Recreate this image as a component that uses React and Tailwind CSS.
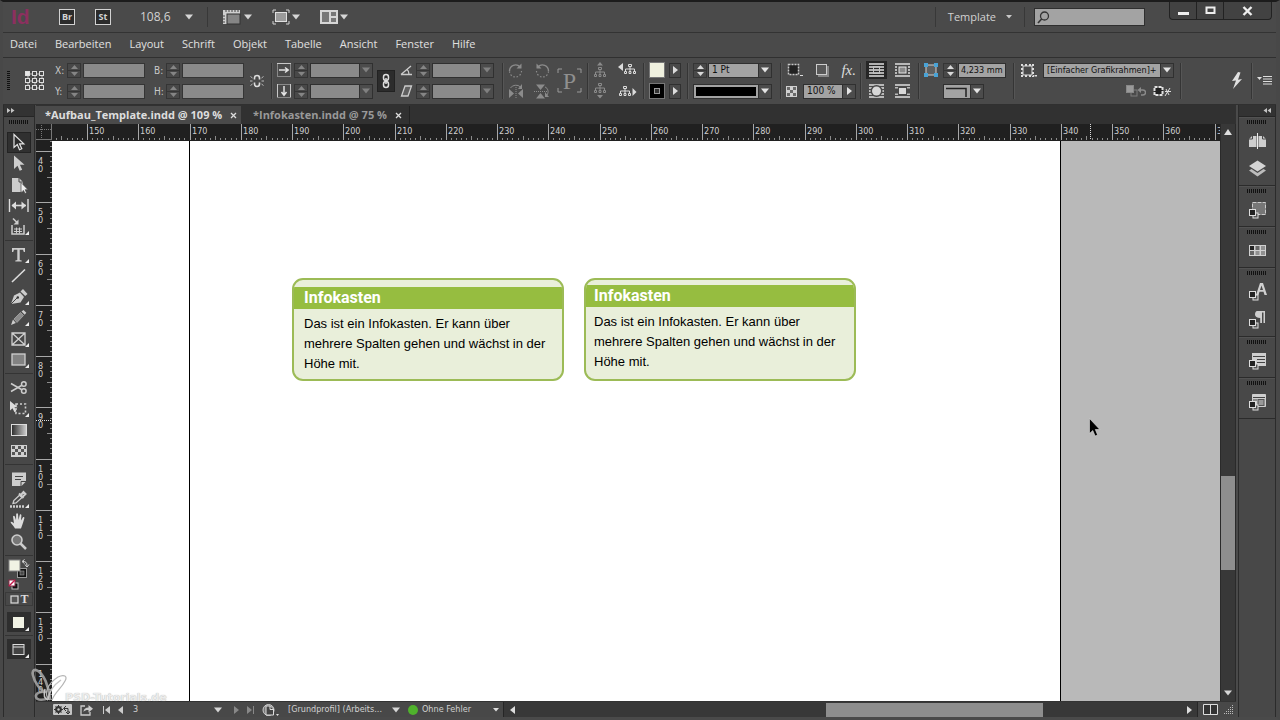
import React from "react";

const SMALL = "font-['DejaVu_Sans_Condensed','DejaVu_Sans',sans-serif]";

/* ---------- generic pieces ---------- */

function Svg({ w, h, children, className = "" }) {
  return (
    <svg width={w} height={h} viewBox={`0 0 ${w} ${h}`} fill="none" aria-hidden="true" className={`shrink-0 ${className}`}>
      {children}
    </svg>
  );
}

function Down({ className = "text-[#d6d6d6]" }) {
  return (
    <Svg w={8} h={6} className={className}>
      <path d="M0 0.5h8L4 5.5z" fill="currentColor" />
    </Svg>
  );
}

function Grip() {
  return (
    <Svg w={20} h={4}>
      {Array.from({ length: 10 }, (_, i) => (
        <rect key={i} x={i * 2} y="0" width="1" height="4" fill="#111" />
      ))}
    </Svg>
  );
}

function Spinner({ label, dim }) {
  const tone = dim ? "text-[#858585]" : "text-[#d8d8d8]";
  return (
    <span className={`flex h-[15px] w-3.5 shrink-0 flex-col border border-[#353535] bg-[#484848] ${tone}`}>
      <button type="button" aria-label={`${label} erhöhen`} className="flex flex-1 items-center justify-center border-b border-[#353535]">
        <Svg w={7} h={4}><path d="M0 4h7L3.5 0z" fill="currentColor" /></Svg>
      </button>
      <button type="button" aria-label={`${label} verringern`} className="flex flex-1 items-center justify-center">
        <Svg w={7} h={4}><path d="M0 0h7L3.5 4z" fill="currentColor" /></Svg>
      </button>
    </span>
  );
}

function Field({ label, width }) {
  return (
    <div className="flex h-4 items-center">
      <label htmlFor={`f-${label}`} className="w-3 text-[10px] text-[#c9c9c9]">{label}:</label>
      <Spinner label={label} dim />
      <input id={`f-${label}`} className={`ml-0.5 h-[15px] border border-[#353535] bg-[#8a8a8a] px-1 text-[10px] ${width}`} />
    </div>
  );
}

function Drop({ label, value = "", width, dim, side, size = "text-[10px]", children }) {
  return (
    <div className={`grid h-[15px] items-stretch border border-[#303030] ${width} ${dim ? "bg-[#8a8a8a] text-[#808080]" : "bg-[#a3a3a3] text-[#e4e4e4]"}`}>
      <select aria-label={label} className={`[grid-area:1/1] w-full min-w-0 appearance-none bg-transparent pl-[3px] leading-3 text-[#101010] ${size}`}>
        <option>{value}</option>
      </select>
      {children}
      <span className="pointer-events-none flex w-[13px] items-center justify-center justify-self-end border-l border-[#303030] bg-[#4c4c4c] [grid-area:1/1]">
        {side ? <Svg w={5} h={8}><path d="M0 0v8l5-4z" fill="currentColor" /></Svg> : <Down className="" />}
      </span>
    </div>
  );
}

function Divider({ w = "w-1.5" }) {
  return <div className={`h-9 shrink-0 border-l border-[#353535] ${w}`}><div className="h-full w-px bg-[#565656]" /></div>;
}

function Col({ w, children }) {
  return <div className={`flex shrink-0 flex-col gap-[5px] ${w}`}>{children}</div>;
}

function Cell({ label, children, className = "" }) {
  return <button type="button" aria-label={label} className={`flex h-4 items-center ${className}`}>{children}</button>;
}

/* ---------- top bars ---------- */

function TitleBar() {
  return (
    <header className="flex h-[31px] shrink-0 items-center border-b border-[#333] pl-2 text-[#d2d2d2]">
      <span className="w-12 text-[21px] font-bold leading-6 text-[#8c2f5f] font-['Liberation_Sans',sans-serif]">Id</span>
      <button type="button" className="mr-5 h-4 w-4 border border-[#d2d2d2] bg-[#2b2b2b] text-center text-[9px] font-bold leading-[14px]">Br</button>
      <button type="button" className="mr-[22px] h-4 w-4 border border-[#d2d2d2] bg-[#2b2b2b] text-center text-[9px] font-bold leading-[14px]">St</button>
      <button type="button" aria-label="Zoomstufe" className="flex w-[59px] items-center gap-3.5 pl-[7px] text-[12px]">
        <span className="w-8 text-center">108,6</span><Down />
      </button>
      <div className="h-5 w-4 border-r border-[#383838]" />
      <button type="button" aria-label="Anzeigeoptionen" className="ml-3.5 flex w-12 items-center gap-0.5">
        <Svg w={20} h={16}>
          <path d="M1 1h17v4H5v10H1z" fill="#cfcfcf" />
          <path d="M4 1v2M7 1v2M10 1v2M13 1v2M16 1v2M1 7h2M1 10h2M1 13h2" stroke="#444" />
          <rect x="5" y="5" width="13" height="10" fill="#858585" stroke="#333" />
        </Svg>
        <Down />
      </button>
      <button type="button" aria-label="Bildschirmmodus" className="ml-0.5 flex w-12 items-center gap-0.5">
        <Svg w={18} h={16}>
          <path d="M1 4V1h3M14 1h3v3M17 12v3h-3M4 15H1v-3" stroke="#d2d2d2" />
          <rect x="3.5" y="3.5" width="11" height="9" fill="#9b9b9b" stroke="#e0e0e0" />
        </Svg>
        <Down />
      </button>
      <button type="button" aria-label="Dokumente anordnen" className="flex items-center gap-0.5">
        <Svg w={18} h={16}>
          <rect x="0" y="1" width="18" height="14" fill="#d6d6d6" />
          <path d="M2 3h7v10H2zM11 3h5v4h-5zM11 9h5v4h-5z" fill="#777" />
        </Svg>
        <Down />
      </button>
      <div className="ml-auto h-5 border-l border-[#383838]" />
      <button type="button" className="flex items-center gap-2.5 px-3 text-[11px]">
        Template
        <Svg w={6} h={4}><path d="M0 0h6L3 3.5z" fill="#c8c8c8" /></Svg>
      </button>
      <div className="h-5 border-l border-[#383838]" />
      <label className="ml-[9px] mr-6 flex h-[18px] w-[111px] items-center border border-[#2f2f2f] bg-[#a3a3a3] pl-0.5">
        <Svg w={13} h={13}>
          <circle cx="7.5" cy="5" r="4" stroke="#333" strokeWidth="1.3" />
          <path d="M4.6 8L1 12" stroke="#333" strokeWidth="1.6" />
        </Svg>
        <input aria-label="Suche" className="min-w-0 flex-1 bg-transparent text-[11px] text-black" />
      </label>
      <div className="mr-1 flex h-[18px] self-start rounded-b border border-t-0 border-[#222] bg-[#424242]">
        <button type="button" aria-label="Minimieren" className="flex w-[27px] items-center justify-center border-r border-[#222]">
          <Svg w={11} h={10}><path d="M0 6h11v3H0z" fill="#eee" /></Svg>
        </button>
        <button type="button" aria-label="Maximieren" className="flex w-[27px] items-center justify-center border-r border-[#222]">
          <Svg w={11} h={9}><path d="M1.5 1.5h8v5.5h-8z" stroke="#eee" strokeWidth="2" /></Svg>
        </button>
        <button type="button" aria-label="Schließen" className="flex w-[47px] items-center justify-center">
          <Svg w={11} h={10}><path d="M1.5 1l8 8M9.5 1l-8 8" stroke="#eee" strokeWidth="2.4" /></Svg>
        </button>
      </div>
    </header>
  );
}

const MENUS = ["Datei", "Bearbeiten", "Layout", "Schrift", "Objekt", "Tabelle", "Ansicht", "Fenster", "Hilfe"];

function MenuBar() {
  return (
    <nav className="flex h-6 shrink-0 items-center gap-[18px] pb-0.5 pl-[7px] text-[11px] text-[#e0e0e0]">
      {MENUS.map((m) => <button type="button" key={m}>{m}</button>)}
    </nav>
  );
}

function Rotate({ flip }) {
  return (
    <Svg w={16} h={15} className={flip ? "-scale-x-100" : ""}>
      <path d="M1.5 8a6 6 0 0 1 10.5-4" stroke="#8b8b8b" strokeWidth="1.4" />
      <path d="M13.5 0.5v5h-5z" fill="#8b8b8b" />
      <path d="M13.5 8a6 6 0 0 1-12 0" stroke="#8b8b8b" strokeWidth="1.2" strokeDasharray="1.5 1.8" />
    </Svg>
  );
}

function Tree({ dir, tone }) {
  const shift = { up: "translate(0 2)", down: "translate(0 -3)", left: "translate(5 -1)", right: "translate(0 0)" }[dir];
  return (
    <Svg w={20} h={16} className={tone}>
      <g stroke="currentColor">
        {dir === "up" && <path d="M4 3.500h6L7 0z" fill="currentColor" stroke="none" />}
        {dir === "down" && <path d="M4 12h6l-3 3.500z" fill="currentColor" stroke="none" />}
        {dir === "left" && <path d="M5 1v8L0 5z" fill="currentColor" stroke="none" />}
        {dir === "right" && <path d="M14.500 5v8l4-4z" fill="currentColor" stroke="none" />}
        <g transform={shift}>
          <path d="M5.500 3.500h3v2h-3zM7 6v4M2.500 10V8h9v2M1.500 10.500h2v2h-2zM6 10.500h2v2H6zM10.500 10.500h2v2h-2z" />
        </g>
      </g>
    </Svg>
  );
}

function Wrap({ kind }) {
  return (
    <Svg w={15} h={14}>
      <path d="M0 1h15M0 4h15M0 7h15M0 10h15M0 13h15" stroke="#dedede" strokeWidth="1.4" />
      {kind === "none" && <rect x="4.500" y="3.500" width="6" height="7" stroke="#c0c0c0" />}
      {kind === "box" && <><rect x="2" y="2.500" width="11" height="9" fill="#484848" /><rect x="4" y="4" width="7" height="6" fill="#8a8a8a" stroke="#e4e4e4" /></>}
      {kind === "shape" && <><circle cx="7.500" cy="7" r="6" fill="#484848" /><circle cx="7.500" cy="7" r="4.500" fill="#d8d8d8" /></>}
      {kind === "jump" && <><rect y="4.500" width="15" height="5" fill="#484848" /><rect x="3" y="2.500" width="9" height="9" fill="#484848" /><rect x="4" y="4" width="7" height="6" fill="#d8d8d8" /></>}
    </Svg>
  );
}

function Shift({ down }) {
  return (
    <Svg w={14} h={14}>
      <rect x="0.500" y="0.500" width="13" height="13" stroke="#c8c8c8" strokeDasharray="1 1" />
      <path d={down ? "M0.500 0v13M13.500 0v13" : "M0 0.500h14"} stroke="#c8c8c8" />
      <path d={down ? "M7 2v9M4.500 8L7 11.200 9.500 8" : "M2 7h9M8 4.500L11.200 7 8 9.500"} stroke="#e4e4e4" strokeWidth="1.500" />
    </Svg>
  );
}

function ControlBar() {
  return (
    <section aria-label="Steuerung" className={`flex h-12 shrink-0 items-center overflow-hidden border-y border-[#303030] pb-px text-[#c9c9c9] ${SMALL}`}>
      <div className="flex w-[22px] shrink-0 pl-1">
        <Svg w={4} h={20}>
          {Array.from({ length: 10 }, (_, i) => <rect key={i} y={i * 2} width="3" height="1" fill="#111" />)}
        </Svg>
      </div>
      <div className="w-[30px] shrink-0">
        <Svg w={20} h={20}>
          <path d="M3 3h14v14H3zM10 3v14M3 10h14" stroke="#bcbcbc" />
          {[0, 1, 2].map((r) => [0, 1, 2].map((c) => (
            <rect key={`${r}${c}`} x={c * 7 + 0.5} y={r * 7 + 0.5} width="4" height="4" fill={r + c === 0 ? "#e6e6e6" : "#484848"} stroke="#dedede" />
          )))}
        </Svg>
      </div>
      <Col w="w-[99px]"><Field label="X" width="w-[62px]" /><Field label="Y" width="w-[62px]" /></Col>
      <Col w="w-24"><Field label="B" width="w-[62px]" /><Field label="H" width="w-[62px]" /></Col>
      <button type="button" aria-label="Proportionen" className="w-[21px] shrink-0">
        <Svg w={14} h={14}>
          <path d="M4.500 5.500V4a2.500 2.500 0 0 1 5 0v1.500M4.500 8.500V10a2.500 2.500 0 0 0 5 0V8.500" stroke="#ddd" strokeWidth="1.600" />
          <path d="M0 7h2.500M11.500 7H14M0.500 2.500l2 1.500M13.500 2.500l-2 1.500M0.500 11.500l2-1.500M13.500 11.500l-2-1.500" stroke="#bbb" />
        </Svg>
      </button>
      <Divider />
      <Col w="w-[17px]"><Cell label="Skalierung X"><Shift /></Cell><Cell label="Skalierung Y"><Shift down /></Cell></Col>
      <Col w="w-[83px]">
        <div className="flex h-4 items-center gap-0.5"><Spinner label="Skalierung X" dim /><Drop label="Skalierung X Wert" width="w-[63px]" dim /></div>
        <div className="flex h-4 items-center gap-0.5"><Spinner label="Skalierung Y" dim /><Drop label="Skalierung Y Wert" width="w-[63px]" dim /></div>
      </Col>
      <div className="w-[23px] shrink-0">
        <button type="button" aria-label="Verketten" className="flex h-[22px] w-[18px] items-center justify-center border border-[#222] bg-[#2c2c2c]">
          <Svg w={8} h={16}>
            <rect x="1.500" y="1.500" width="5" height="6" rx="2.500" stroke="#ddd" strokeWidth="1.500" />
            <rect x="1.500" y="8.500" width="5" height="6" rx="2.500" stroke="#ddd" strokeWidth="1.500" />
            <path d="M4 5v6" stroke="#ddd" strokeWidth="1.500" />
          </Svg>
        </button>
      </div>
      <Col w="w-4">
        <Cell label="Drehwinkel"><Svg w={13} h={12}><path d="M1 10.500h11M1 10.500L11 2M7 5.500c1.500 1 2 3 2 5" stroke="#ccc" strokeWidth="1.300" /></Svg></Cell>
        <Cell label="Scherwinkel"><Svg w={13} h={12}><path d="M5 1h6.500L8 11H1.500z" fill="#606060" stroke="#ccc" strokeWidth="1.300" /></Svg></Cell>
      </Col>
      <Col w="w-[86px]">
        <div className="flex h-4 items-center gap-0.5"><Spinner label="Drehwinkel" dim /><Drop label="Drehwinkel Wert" width="w-[62px]" dim /></div>
        <div className="flex h-4 items-center gap-0.5"><Spinner label="Scherwinkel" dim /><Drop label="Scherwinkel Wert" width="w-[62px]" dim /></div>
      </Col>
      <Divider />
      <Col w="w-[26px]">
        <Cell label="Im Uhrzeigersinn drehen"><Rotate /></Cell>
        <Cell label="Horizontal spiegeln">
          <Svg w={16} h={15}>
            <path d="M1 5v9l5-4.500zM15 5v9l-5-4.500z" fill="#8b8b8b" />
            <path d="M8 3v12" stroke="#8b8b8b" strokeDasharray="1 1" /><path d="M2.500 4a6 5 0 0 1 10-1" stroke="#8b8b8b" /><path d="M14 0v5h-4z" fill="#8b8b8b" />
          </Svg>
        </Cell>
      </Col>
      <Col w="w-[23px]">
        <Cell label="Gegen Uhrzeigersinn drehen"><Rotate flip /></Cell>
        <Cell label="Vertikal spiegeln">
          <Svg w={16} h={15}>
            <path d="M2 0.500h9L6.500 6zM2 14.500h9L6.500 9z" fill="#8b8b8b" />
            <path d="M0 7.500h13" stroke="#8b8b8b" strokeDasharray="1 1" /><path d="M11 3c3 1 4 5 2 8" stroke="#8b8b8b" /><path d="M11 8v5h4z" fill="#8b8b8b" />
          </Svg>
        </Cell>
      </Col>
      <div className="w-[30px] shrink-0">
        <div className="grid h-[25px] w-[25px] place-items-center">
          <Svg w={25} h={25} className="[grid-area:1/1]"><path d="M1 5V1h4M20 1h4v4M24 20v4h-4M5 24H1v-4" stroke="#9a9a9a" /></Svg>
          <span className="text-[24px] leading-6 text-[#8f8f8f] [grid-area:1/1] font-['Liberation_Serif',serif]">P</span>
        </div>
      </div>
      <Divider />
      <Col w="w-[25px]"><Cell label="Container auswählen"><Tree dir="up" tone="text-[#8b8b8b]" /></Cell><Cell label="Inhalt auswählen"><Tree dir="down" tone="text-[#8b8b8b]" /></Cell></Col>
      <Col w="w-[25px]"><Cell label="Vorheriges Objekt"><Tree dir="left" tone="text-[#dcdcdc]" /></Cell><Cell label="Nächstes Objekt"><Tree dir="right" tone="text-[#dcdcdc]" /></Cell></Col>
      <Divider />
      <Col w="w-5">
        <Cell label="Fläche"><span className="h-4 w-4 border border-[#777] bg-[#eff0de]" /></Cell>
        <Cell label="Kontur"><span className="flex h-4 w-4 items-center justify-center border border-[#777] bg-black"><span className="h-1.5 w-1.5 border border-[#999] bg-[#333]" /></span></Cell>
      </Col>
      <Col w="w-[18px]">
        {["Flächenfarbe wählen", "Konturfarbe wählen"].map((l) => (
          <Cell key={l} label={l}><span className="flex h-[15px] w-3 items-center justify-center border border-[#303030]"><Svg w={5} h={8}><path d="M0 0v8l5-4z" fill="#ddd" /></Svg></span></Cell>
        ))}
      </Col>
      <Divider />
      <Col w="w-[87px]">
        <div className="flex h-4 items-center gap-px"><Spinner label="Konturstärke" /><Drop label="Konturstärke Wert" value="1 Pt" width="w-16" /></div>
        <div className="flex h-4 items-center">
          <Drop label="Konturtyp" width="w-[79px]"><span className="pointer-events-none my-0.5 ml-0.5 mr-[15px] bg-black [grid-area:1/1]" /></Drop>
        </div>
      </Col>
      <Divider />
      <Col w="w-[74px]">
        <div className="flex h-4 items-center justify-between pl-px pr-1">
          <Cell label="Kontureffekt"><Svg w={16} h={14}><rect x="1.500" y="1.500" width="10" height="10" fill="#222" stroke="#c8c8c8" strokeWidth="1.500" strokeDasharray="2 1" /><path d="M13 12h3v1h-3z" fill="#ddd" /></Svg></Cell>
          <Cell label="Schlagschatten"><Svg w={14} h={14}><rect x="3" y="3" width="11" height="11" fill="#858585" /><rect x="1.500" y="1.500" width="10" height="10" fill="#585858" stroke="#ccc" /></Svg></Cell>
          <Cell label="Effekte" className="text-[15px] italic leading-4 text-[#ddd] font-['Liberation_Serif',serif]">fx.</Cell>
        </div>
        <div className="flex h-4 items-center gap-1.5">
          <Svg w={11} h={11}><rect width="11" height="11" fill="#d0d0d0" /><path d="M1 1h3v3H1zM7 1h3v3H7zM4 4h3v3H4zM1 7h3v3H1zM7 7h3v3H7z" fill="#6a6a6a" /></Svg>
          <Drop label="Deckkraft" value="100 %" width="w-[53px]" side />
        </div>
      </Col>
      <Divider />
      <Col w="w-[29px]">
        <Cell label="Kein Textumfluss"><span className="flex h-[18px] w-[21px] shrink-0 items-center justify-center bg-[#262626]"><Wrap kind="none" /></span></Cell>
        <Cell label="Umfließen der Objektform"><span className="flex w-[21px] justify-center"><Wrap kind="shape" /></span></Cell>
      </Col>
      <Col w="w-[23px]">
        <Cell label="Begrenzungsrahmen umfließen"><Wrap kind="box" /></Cell>
        <Cell label="Objekt überspringen"><Wrap kind="jump" /></Cell>
      </Col>
      <Divider />
      <Col w="w-[19px]">
        <Cell label="Eckenoptionen"><Svg w={14} h={14}><rect x="2" y="2" width="10" height="10" fill="#606060" stroke="#d0d0d0" /><path d="M0 0h4v4H0zM10 0h4v4h-4zM0 10h4v4H0zM10 10h4v4h-4z" fill="#4aa3d6" /></Svg></Cell>
        <div className="h-4" />
      </Col>
      <Col w="w-[70px]">
        <div className="flex h-4 items-center gap-px">
          <Spinner label="Eckenradius" />
          <input aria-label="Eckenradius" defaultValue="4,233 mm" className="h-[15px] w-12 border border-[#303030] bg-[#a3a3a3] pl-0.5 text-[9px] leading-3 text-[#101010]" />
        </div>
        <div className="flex h-4 items-center">
          <Drop label="Eckenform" width="w-[41px]"><Svg w={24} h={12} className="pointer-events-none [grid-area:1/1]"><path d="M2 3.500h20V12" stroke="#222" strokeWidth="1.500" /></Svg></Drop>
        </div>
      </Col>
      <Divider w="w-2" />
      <Col w="w-[22px]">
        <Cell label="Objektformat"><Svg w={16} h={13}><rect x="2" y="2" width="9" height="9" stroke="#ddd" /><path d="M0 1h13M0 12h13M1 0v13M12 0v13" stroke="#ddd" strokeDasharray="2 2" strokeWidth="2" /><path d="M13.500 11h2.500v1.500h-2.500z" fill="#ddd" /></Svg></Cell>
        <div className="h-4" />
      </Col>
      <Col w="w-[137px]">
        <div className="flex h-4 items-center"><Drop label="Objektformat Wert" value="[Einfacher Grafikrahmen]+" width="w-[131px]" size="text-[9px]" /></div>
        <div className="flex h-4 items-center justify-end gap-[7px] pr-2">
          <Cell label="Abweichungen löschen"><Svg w={20} h={12}><rect x="5" y="5" width="6" height="6" stroke="#7c7c7c" /><rect x="0.500" y="0.500" width="7" height="7" fill="#9a9a9a" stroke="#888" /><path d="M13 5h4a2.500 2.500 0 0 1 0 5h-2" stroke="#8b8b8b" strokeWidth="1.400" /><path d="M15 2v6l-3.500-3z" fill="#8b8b8b" /></Svg></Cell>
          <Cell label="Attribute löschen"><Svg w={19} h={12}><rect x="1.500" y="2" width="8" height="8" fill="#222" stroke="#e0e0e0" strokeWidth="2" strokeDasharray="3 1" /><path d="M12 11l5-8M12 6.500h6M13 4l3 6" stroke="#ddd" /></Svg></Cell>
        </div>
      </Col>
      <Divider />
      <button type="button" aria-label="Schnell anwenden" className="ml-auto mr-2 shrink-0">
        <Svg w={12} h={17}><path d="M7 0L1 9l4-0.500L2 17l9-10-4 0.800L9.500 0.500z" fill="#e0e0e0" /></Svg>
      </button>
      <Divider />
      <button type="button" aria-label="Bedienfeldmenü" className="mr-1 shrink-0">
        <Svg w={15} h={9}><path d="M0 1h5L2.500 4z" fill="#ddd" /><path d="M6 0.500h9M6 3h9M6 5.500h9M6 8h9" stroke="#ddd" /></Svg>
      </button>
    </section>
  );
}

/* ---------- tools ---------- */

const L = "#cdcdcd";
const CORNER = <path d="M21 14v4h-4z" fill="#eee" />;

const TOOLS = [
  [
    ["Auswahl", <path key="a" d="M6 1.500v13l3.300-3 2.200 5.300 2.300-1-2.300-5h4.300z" fill="#2c2c2c" stroke="#e4e4e4" strokeWidth="1.200" />, true],
    ["Direktauswahl", <path key="a" d="M6 1.500v13.500l3.500-3.300 2.200 5 2.500-1-2.300-5h4.600z" fill={L} />],
    ["Seite", <g key="a"><path d="M4 3h7l4 4v10H4z" fill={L} /><path d="M11 3v4h4" stroke="#484848" /><path d="M13 7.500v10l2.500-2 1.500 3 1.500-0.800-1.300-3H20z" fill="#eee" stroke="#484848" strokeWidth="0.700" /></g>],
    ["Lücke", <g key="a" stroke="#dcdcdc"><path d="M1.500 3v13M20 3v13" strokeWidth="1.400" /><path d="M4 9.500h14" strokeWidth="1.600" /><path d="M8 5.500v8L3.500 9.500zM13.500 5.500v8L18 9.500z" fill="#dcdcdc" stroke="none" /></g>],
    ["Inhaltsaufnahme", <g key="a"><path d="M4 8v9h12V8" stroke={L} strokeWidth="1.500" /><path d="M6 12h8M6 14.500h8M8.500 10.500v6M11.500 10.500v6" stroke={L} /><path d="M5 1.500l4 4" stroke={L} strokeWidth="1.600" /><path d="M10.500 2.500v5h-5z" fill={L} />{CORNER}</g>],
  ],
  [
    ["Text", <g key="a"><path d="M4 3h13v4h-1.200L15 4.800h-3.300V15l2 0.500v1H7.300v-1l2-0.500V4.800H6L5.200 7H4z" fill={L} />{CORNER}</g>],
    ["Linie", <path key="a" d="M4 16L17 3.500" stroke="#dcdcdc" strokeWidth="1.600" />],
    ["Zeichenstift", <g key="a"><path d="M3 17L6 8.500 12 5.500l4 4.500-3.500 5.500z" fill={L} /><path d="M3 17l6-6" stroke="#444" /><circle cx="9.800" cy="10.500" r="1.200" fill="#333" /><path d="M12.500 4.500L15 2l4.500 5-2.300 2z" fill={L} />{CORNER}</g>],
    ["Buntstift", <g key="a"><path d="M3 17l2-5.500L7.800 15z" fill={L} /><path d="M6 11l6.500-6.500 3 3L9 14.500z" fill="#8c8c8c" stroke="#bbb" strokeWidth="0.600" /><path d="M13.500 3.500l2-1.500 2.800 2.800-1.600 2z" fill={L} />{CORNER}</g>],
    ["Rechteckrahmen", <g key="a"><path d="M4 4h13v12H4zM4 4l13 12M17 4L4 16" stroke="#d0d0d0" strokeWidth="1.300" />{CORNER}</g>],
    ["Rechteck", <g key="a"><rect x="4" y="4" width="13" height="11" fill="#828282" stroke="#d0d0d0" strokeWidth="1.300" />{CORNER}</g>],
  ],
  [
    ["Schere", <g key="a" stroke={L} strokeWidth="1.500"><path d="M3 5.500l10.500 6M3 13.500l10.500-6" /><circle cx="15.800" cy="6" r="2.300" /><circle cx="15.800" cy="13" r="2.300" /></g>],
    ["Frei transformieren", <g key="a"><path d="M8 5h9.500v9.500H8z" stroke={L} strokeWidth="1.600" strokeDasharray="2 2" /><path d="M2 2v9.500l2.500-2.200 2 4 2-1-2-4h3.300z" fill="#dcdcdc" />{CORNER}</g>],
    ["Verlauf", <g key="a"><linearGradient id="gr"><stop stopColor="#2a2a2a" /><stop offset="1" stopColor="#d0d0d0" /></linearGradient><rect x="3.500" y="4.500" width="15" height="11" fill="url(#gr)" stroke="#dcdcdc" /></g>],
    ["Weiche Verlaufskante", <g key="a"><rect x="3.500" y="4.500" width="15" height="11" fill="#d0d0d0" stroke="#d0d0d0" /><path d="M4 5h3v3H4zM10 5h3v3h-3zM16 5h2v3h-2zM7 8h3v3H7zM13 8h3v3h-3zM4 11h3v3H4zM10 11h3v3h-3zM16 11h2v3h-2z" fill="#555" /></g>],
  ],
  [
    ["Notiz", <g key="a"><path d="M4 3.500h14v9L13.500 17H4z" fill={L} /><path d="M7 7.500h8M7 10.500h6" stroke="#444" /><path d="M13 17v-4.500h5" stroke="#444" /></g>],
    ["Pipette", <g key="a"><path d="M5 13.500l0.800-3 6-5.500 2.200 2.500-6 5.500z" stroke={L} strokeWidth="1.300" /><path d="M11 3.500l4.500 4.500M12.500 5.500l3-3.500 2 2-3 3z" stroke={L} strokeWidth="2" /><path d="M2 16.500h14" stroke={L} strokeWidth="2.500" strokeDasharray="2 1" />{CORNER}</g>],
    ["Hand", <path key="a" d="M7 17.500c-1-2.500-4-4.500-4.500-6.500 1-0.800 2.300 0.300 3.500 1.500L5 5.500c0.500-1 1.500-0.800 1.800 0L8 9l0.200-6c0.300-1 1.500-1 1.800 0l0.500 6 1.300-5.200c0.500-0.800 1.500-0.600 1.600 0.400L13 9.500l2-3.300c0.700-0.500 1.500 0 1.400 0.900-0.700 2.600-1.400 5.400-3.400 10.400z" fill="#dcdcdc" />],
    ["Zoom", <g key="a"><circle cx="9" cy="8" r="5" fill="#777" stroke={L} strokeWidth="1.600" /><path d="M12.500 11.500l5.500 5.500" stroke={L} strokeWidth="2.500" /></g>],
  ],
];

function Header({ right }) {
  return (
    <div className={`flex h-3 shrink-0 items-center border-b border-[#252525] bg-[#333] ${right ? "justify-end pr-1" : "pl-[3px]"}`}>
      <Svg w={8} h={5} className={right ? "-scale-x-100" : ""}><path d="M0 0l3.500 2.500L0 5zM4 0l3.500 2.500L4 5z" fill="#c4c4c4" /></Svg>
    </div>
  );
}

const Rule = () => <div className="my-[3px] h-px w-7 shrink-0 bg-[#343434]" />;

function Toolbox() {
  return (
    <aside aria-label="Werkzeuge" className="flex w-8 shrink-0 flex-col border-x border-[#2b2b2b] bg-[#484848]">
      <Header />
      <div className="flex flex-col items-center pr-px">
        <div className="flex h-[15px] items-start pt-[3px]"><Grip /></div>
        {TOOLS.map((group, i) => (
          <React.Fragment key={i}>
            {group.map(([name, art, on]) => (
              <button type="button" key={name} aria-label={name} className={`flex h-[21px] w-6 items-center justify-center ${on ? "border border-[#232323] bg-[#303030]" : ""}`}>
                <svg width="22" height="19" viewBox="0 0 22 19" fill="none" aria-hidden="true" className="shrink-0">{art}</svg>
              </button>
            ))}
            <Rule />
          </React.Fragment>
        ))}
        <button type="button" aria-label="Fläche und Kontur" className="h-[33px]">
          <Svg w={22} h={33}>
            <rect x="9.500" y="9.500" width="9" height="9" fill="#111" stroke="#999" /><rect x="12" y="12" width="4" height="4" fill="#484848" stroke="#999" strokeWidth="0.600" />
            <rect x="1" y="1" width="11" height="11" fill="#f1f2e4" stroke="#888" />
            <path d="M15 2.500c2.500 0 4 1 4 4M16.500 0.500L14 2.500l2.500 2M17 5.500l2 2.500 2-2.500" stroke="#ddd" />
            <rect x="4" y="24" width="6" height="6" fill="#111" stroke="#bbb" />
            <rect x="1" y="21" width="6" height="6" fill="#fff" stroke="#8a2745" /><path d="M1 27l6-6" stroke="#c5194b" strokeWidth="1.500" />
          </Svg>
        </button>
        <div className="flex h-3.5 w-7 items-center justify-between border border-[#3a3a3a] pl-1 pr-[3px]">
          <button type="button" aria-label="Formatierung Rahmen"><Svg w={9} h={9}><rect x="1" y="1" width="7" height="7" fill="#555" stroke="#ddd" strokeWidth="1.200" /></Svg></button>
          <button type="button" aria-label="Formatierung Text" className="text-[12px] font-bold leading-3 text-[#ddd] font-['Liberation_Serif',serif]">T</button>
        </div>
        <button type="button" aria-label="Farbe anwenden" className="mt-1.5 flex h-5 w-6 items-center justify-center bg-[#2e2e2e]">
          <Svg w={22} h={19}><rect x="5" y="4" width="11" height="11" fill="#f1f2e4" />{CORNER}</Svg>
        </button>
        <Rule />
        <button type="button" aria-label="Normaler Modus" className="flex h-5 w-6 items-center justify-center bg-[#2e2e2e]">
          <Svg w={22} h={19}><rect x="5" y="4.500" width="11" height="10" fill="#444" stroke="#ddd" /><path d="M5 7h11" stroke="#ddd" />{CORNER}</Svg>
        </button>
      </div>
    </aside>
  );
}

/* ---------- document area ---------- */

const STEP = 51.25;

function HRuler() {
  return (
    <svg height="16" className={`min-w-0 flex-1 bg-[#202020] text-[9px] ${SMALL}`} role="img" aria-label="Horizontales Lineal">
      {Array.from({ length: 24 }, (_, m) => {
        const x = Math.round(35 + (m - 1) * STEP);
        return (
          <g key={m}>
            <rect x={x} width="1" height="16" fill="#a8a8a8" />
            {Array.from({ length: 9 }, (_, k) => (
              <rect key={k} x={Math.round(35 + (m - 1) * STEP + (k + 1) * 5.125)} y={k === 4 ? 12 : 14} width="1" height="4" fill="#8c8c8c" />
            ))}
            {m > 0 && <text x={x + 2} y="10" fill="#cfcfcf">{140 + m * 10}</text>}
          </g>
        );
      })}
      <path d="M1038.5 0v16" stroke="#ddd" strokeDasharray="1 1" />
    </svg>
  );
}

function VRuler() {
  return (
    <svg width="16" height="100%" className={`block shrink-0 bg-[#202020] text-[9px] ${SMALL}`} role="img" aria-label="Vertikales Lineal">
      {Array.from({ length: 12 }, (_, m) => {
        const y = Math.round(10 + (m - 1) * STEP);
        return (
          <g key={m}>
            <rect y={y} width="16" height="1" fill="#a8a8a8" />
            {Array.from({ length: 9 }, (_, k) => (
              <rect key={k} x={k === 4 ? 11 : 14} y={Math.round(10 + (m - 1) * STEP + (k + 1) * 5.125)} width="5" height="1" fill="#8c8c8c" />
            ))}
            {m > 0 && String(30 + m * 10).split("").map((d, i) => (
              <text key={i} x="2" y={y + 13 + i * 8} fill="#cfcfcf">{d}</text>
            ))}
          </g>
        );
      })}
      <path d="M0 279.500h16" stroke="#ddd" strokeDasharray="1 1" />
    </svg>
  );
}

function Infobox({ place, strip, inset }) {
  return (
    <article className={`absolute min-h-[103px] w-[272px] overflow-hidden rounded-[11px] border-2 border-[#9cbb56] bg-[#e9efda] text-black ${place}`}>
      <h2 className={`h-[22px] bg-[#96bd40] text-[16px] font-bold leading-[22px] text-white font-['Roboto',sans-serif] ${strip} ${inset}`}>Infokasten</h2>
      <p className={`whitespace-nowrap pt-[5px] text-[13px] leading-5 font-['Liberation_Sans',sans-serif] ${inset}`}>
        Das ist ein Infokasten. Er kann über<br />mehrere Spalten gehen und wächst in der<br />Höhe mit.
      </p>
    </article>
  );
}

function Canvas() {
  return (
    <main className="relative flex min-w-0 flex-1 overflow-hidden bg-[#b9b9b9]">
      <div className="w-[138px] shrink-0 border-r border-black bg-white" />
      <div className="w-[871px] shrink-0 border-r border-black bg-white" />
      <Infobox place="left-[240px] top-[137px]" strip="mt-[7px]" inset="pl-2.5" />
      <Infobox place="left-[532px] top-[137px]" strip="mt-[5px]" inset="pl-2" />
      <svg width="12" height="20" viewBox="0 0 12 20" aria-hidden="true" className="absolute left-[1037px] top-[277px]">
        <path d="M0.500 0.500v15l3.300-3 2.300 5.500 2.500-1-2.300-5.500h4.500z" fill="#000" stroke="#ddd" strokeWidth="0.600" />
      </svg>
    </main>
  );
}

function VScroll() {
  return (
    <div className="flex w-4 shrink-0 flex-col items-center border-x border-[#2a2a2a] bg-[#383838]">
      <button type="button" aria-label="Nach oben" className="flex h-4 w-full items-center justify-center"><Svg w={8} h={6}><path d="M0 6h8L4 0z" fill="#ddd" /></Svg></button>
      <div className="flex w-full flex-1 flex-col">
        <div className="flex-[336]" /><div className="h-[94px] bg-[#8e8e8e]" /><div className="flex-[115]" />
      </div>
      <button type="button" aria-label="Nach unten" className="flex h-4 w-full items-center justify-center"><Down /></button>
    </div>
  );
}

function Tabs() {
  return (
    <div role="tablist" className="flex h-[19px] shrink-0 bg-[#313131] pt-px text-[11px] font-bold">
      <div className="flex items-center bg-[#4a4a4a] pl-[9px] pr-1 text-[#dedede]">
        <button type="button" role="tab" aria-selected="true" className="w-[185px] text-left">*Aufbau_Template.indd @ 109 %</button>
        <button type="button" aria-label="Aufbau_Template schließen"><Svg w={7} h={7}><path d="M1 1l5 5M6 1L1 6" stroke="#ddd" strokeWidth="1.300" /></Svg></button>
      </div>
      <div className="flex items-center border-r border-[#222] pl-3 pr-[7px] text-[#999]">
        <button type="button" role="tab" aria-selected="false" className="w-[142px] text-left">*Infokasten.indd @ 75 %</button>
        <button type="button" aria-label="Infokasten schließen"><Svg w={7} h={7}><path d="M1 1l5 5M6 1L1 6" stroke="#ddd" strokeWidth="1.300" /></Svg></button>
      </div>
    </div>
  );
}

function StatusBar() {
  return (
    <footer className={`flex h-4 shrink-0 items-center border-t border-[#333] bg-[#484848] text-[9px] text-[#d0d0d0] ${SMALL}`}>
      <button type="button" aria-label="Synchronisierung" className="ml-[17px] w-[27px]"><Svg w={19} h={11}><rect width="19" height="11" rx="1" fill="#c4c4c4" /><circle cx="5.500" cy="5.500" r="2.500" stroke="#333" strokeWidth="1.800" /><path d="M5.500 1v9M1 5.500h9M2.500 2.500l6 6M8.500 2.500l-6 6" stroke="#333" /><circle cx="5.500" cy="5.500" r="1.200" fill="#c4c4c4" /><path d="M11 4.500h4V8M17 8h-3M13 2l-2.500 2.500L13 7M13 8l2 2 2-2" stroke="#333" /></Svg></button>
      <button type="button" aria-label="Teilen" className="w-[23px]"><Svg w={13} h={12}><path d="M5 2H1v9h9V8" stroke="#ccc" strokeWidth="1.300" /><path d="M3.500 8c0-3 2-4.500 5-4.500V1L13 4.800 8.500 8.500V6C6 6 4.500 6.500 3.500 8z" fill="#ccc" /></Svg></button>
      <button type="button" aria-label="Erste Seite" className="w-[15px]"><Svg w={7} h={8}><path d="M0 0h1v8H0zM7 0v8L2 4z" fill="#ccc" /></Svg></button>
      <button type="button" aria-label="Vorherige Seite" className="w-[15px]"><Svg w={5} h={8}><path d="M5 0v8L0 4z" fill="#ccc" /></Svg></button>
      <div className="mr-3 grid w-[89px] items-center">
        <select aria-label="Seite" className="appearance-none bg-transparent [grid-area:1/1]"><option>3</option></select>
        <span className="pointer-events-none justify-self-end [grid-area:1/1]"><Down /></span>
      </div>
      <button type="button" aria-label="Nächste Seite" className="w-[13px]"><Svg w={5} h={8}><path d="M0 0v8l5-4z" fill="#888" /></Svg></button>
      <button type="button" aria-label="Letzte Seite" className="w-[15px]"><Svg w={7} h={8}><path d="M6 0h1v8H6zM0 0v8l5-4z" fill="#888" /></Svg></button>
      <button type="button" aria-label="Öffnen" className="w-[26px]"><Svg w={17} h={12}><circle cx="6.500" cy="6" r="5.500" fill="#777" stroke="#ccc" /><path d="M4 2h4.500L11.500 5v6H4z" fill="#444" stroke="#ddd" /><path d="M8 2v3.500h3.500" stroke="#ddd" /><path d="M14 10h3l-1.500 2z" fill="#ddd" /></Svg></button>
      <button type="button" className="flex w-[120px] items-center justify-between whitespace-nowrap pr-2"><span>[Grundprofil] (Arbeits...</span><Down /></button>
      <span className="mr-1 h-2.5 w-2.5 shrink-0 rounded-full bg-[#4fb22c]" />
      <button type="button" className="flex w-[81px] items-center justify-between whitespace-nowrap pr-1"><span>Ohne Fehler</span><Svg w={6} h={4}><path d="M0 0h6L3 3.500z" fill="#ddd" /></Svg></button>
      <div className="flex h-[15px] min-w-0 flex-1 items-center border-x border-[#262626] bg-[#383838]">
        <button type="button" aria-label="Nach links" className="flex w-4 justify-center"><Svg w={5} h={8}><path d="M5 0v8L0 4z" fill="#ddd" /></Svg></button>
        <div className="flex h-3.5 min-w-0 flex-1"><div className="flex-[306]" /><div className="w-[217px] bg-[#8e8e8e]" /><div className="flex-[138]" /></div>
        <button type="button" aria-label="Nach rechts" className="flex w-4 justify-center"><Svg w={5} h={8}><path d="M0 0v8l5-4z" fill="#ddd" /></Svg></button>
      </div>
      <button type="button" aria-label="Layoutansicht teilen" className="ml-[5px] mr-1.5"><Svg w={15} h={11}><path d="M0.500 0.500h14v10H0.500zM7.500 0v11" fill="#333" stroke="#ddd" /></Svg></button>
      <Svg w={12} h={10}>
        {[0, 1, 2, 3, 4].map((r) => Array.from({ length: r + 1 }, (_, c) => <rect key={`${r}${c}`} x={8 - c * 2} y={r * 2} width="1" height="1" fill="#bbb" />))}
      </Svg>
    </footer>
  );
}

function Watermark() {
  return (
    <div className="pointer-events-none absolute bottom-[13px] left-[28px] flex items-end">
      <Svg w={38} h={37}>
        <path d="M19 32C18 20 13 6 5 3-1 2 2 12 7 19c3 4 7 6 9 6-6-1-12 1-11 5s9 3 12 1" stroke="#a9a9a9" strokeWidth="2.600" strokeOpacity="0.850" />
        <path d="M19 33c-7-5-3-16 8-23 6-3 10-1 7 4-4 8-10 11-13 19" stroke="#b4b4b4" strokeWidth="1.200" /><path d="M17 33c1-9 7-16 13-20M14 22c-2 7 0 10 3 11" stroke="#c6c6c6" strokeWidth="1.500" />
      </Svg>
      <span className="-ml-1 text-[11px] font-bold leading-3 text-[#ececec] [text-shadow:0_0_1px_#a5a5a5] font-['DejaVu_Sans',sans-serif]">PSD-Tutorials.de</span>
    </div>
  );
}

/* ---------- panel dock ---------- */

const LINK = <g><rect x="5" y="13" width="5" height="5" fill="#555" stroke="#ddd" /><rect x="1.500" y="9.500" width="6" height="6" fill="#222" stroke="#ddd" /></g>;

const PANELS = [
  [
    ["Seiten", <g key="a"><path d="M1 8l3-3h4.500v11H1zM18 8l-3-3h-4.500v11H18z" fill="#cfcfcf" /><path d="M9.500 2v16" stroke="#eee" /><path d="M1 8h3.500V5M18 8h-3.500V5" stroke="#484848" /></g>],
    ["Ebenen", <g key="a"><path d="M9.500 1.500L18 7l-8.500 5.500L1 7z" fill="#d4d4d4" /><path d="M1 11.500l2.500-1.500 6 4 6-4 2.500 1.500-8.500 6z" fill="#bcbcbc" /></g>],
  ],
  [["Verknüpfungen", <g key="a"><rect x="4.500" y="2.500" width="13" height="12" fill="#777" stroke="#ccc" strokeDasharray="4 1" />{LINK}</g>]],
  [["Farbfelder", <g key="a"><rect x="1" y="4" width="17" height="11" fill="#d0d0d0" /><path d="M2 5h4v4H2z" fill="#222" /><path d="M7.500 5h4v4h-4zM2 10h4v4H2z" fill="#666" /><path d="M13 5h4v4h-4zM7.500 10h4v4h-4zM13 10h4v4h-4z" fill="#909090" /></g>]],
  [
    ["Zeichenformate", <g key="a"><path d="M12 1h3l4 12h-2.500l-1-3.200h-4l-1 3.200H8zM13.500 3.500L12 8h3z" fill="#cfcfcf" />{LINK}</g>],
    ["Absatzformate", <g key="a"><path d="M9 1h8v12h-1.500V2.500H14V13h-1.800V8C9 8 7 6.500 7 4.500S8 1 9 1z" fill="#cfcfcf" />{LINK}</g>],
  ],
  [["Objektformate", <g key="a"><rect x="4" y="2" width="14" height="13" fill="#cfcfcf" /><path d="M5 5.500h12M9 8.500h8M9 11.500h8" stroke="#444" />{LINK}</g>]],
  [["Tabellenformate", <g key="a"><path d="M4.500 2.500h13v12h-13z" fill="#cfcfcf" stroke="#cfcfcf" /><path d="M5 5.500h12M5 8h4" stroke="#444" /><rect x="10" y="7.500" width="6" height="6" fill="#999" stroke="#555" />{LINK}</g>]],
];

function Dock() {
  return (
    <aside aria-label="Bedienfelder" className="ml-0.5 flex w-[38px] shrink-0 flex-col border-x border-[#2b2b2b] bg-[#484848]">
      <Header right />
      {PANELS.map((g, i) => (
        <div key={i} className="flex flex-col items-center border-b border-t border-b-[#2b2b2b] border-t-[#525252] pb-0.5">
          <div className="flex h-[9px] items-start pt-0.5"><Grip /></div>
          {g.map(([name, art]) => (
            <button type="button" key={name} aria-label={name} className="flex h-7 w-full items-center justify-center pl-px">
              <Svg w={20} h={20}>{art}</Svg>
            </button>
          ))}
        </div>
      ))}
    </aside>
  );
}

export default function App() {
  return (
    <div className="relative flex h-screen min-h-[700px] flex-col overflow-hidden border-b-[3px] border-l-[3px] border-r-4 border-t-2 border-x-[#484848] border-b-[#4a4a4a] border-t-[#1c1c1c] bg-[#4a4a4a] font-['Open_Sans','Noto_Sans',sans-serif]">
      <TitleBar />
      <MenuBar />
      <ControlBar />
      <div className="flex min-h-0 flex-1">
        <Toolbox />
        <div className="ml-px flex min-w-0 flex-1 flex-col">
          <Tabs />
          <div className="flex min-h-0 flex-1">
            <div className="flex min-w-0 flex-1 flex-col">
              <div className="flex h-[17px] shrink-0 bg-[#202020]">
                <Svg w={16} h={16}><path d="M0 5.500h15M5.500 1v14" stroke="#777" strokeDasharray="1 1" /><path d="M15.500 0v16M0 15.500h16" stroke="#777" /></Svg>
                <HRuler />
              </div>
              <div className="flex min-h-0 flex-1"><VRuler /><Canvas /></div>
            </div>
            <VScroll />
          </div>
          <StatusBar />
        </div>
        <Dock />
      </div>
      <Watermark />
    </div>
  );
}
